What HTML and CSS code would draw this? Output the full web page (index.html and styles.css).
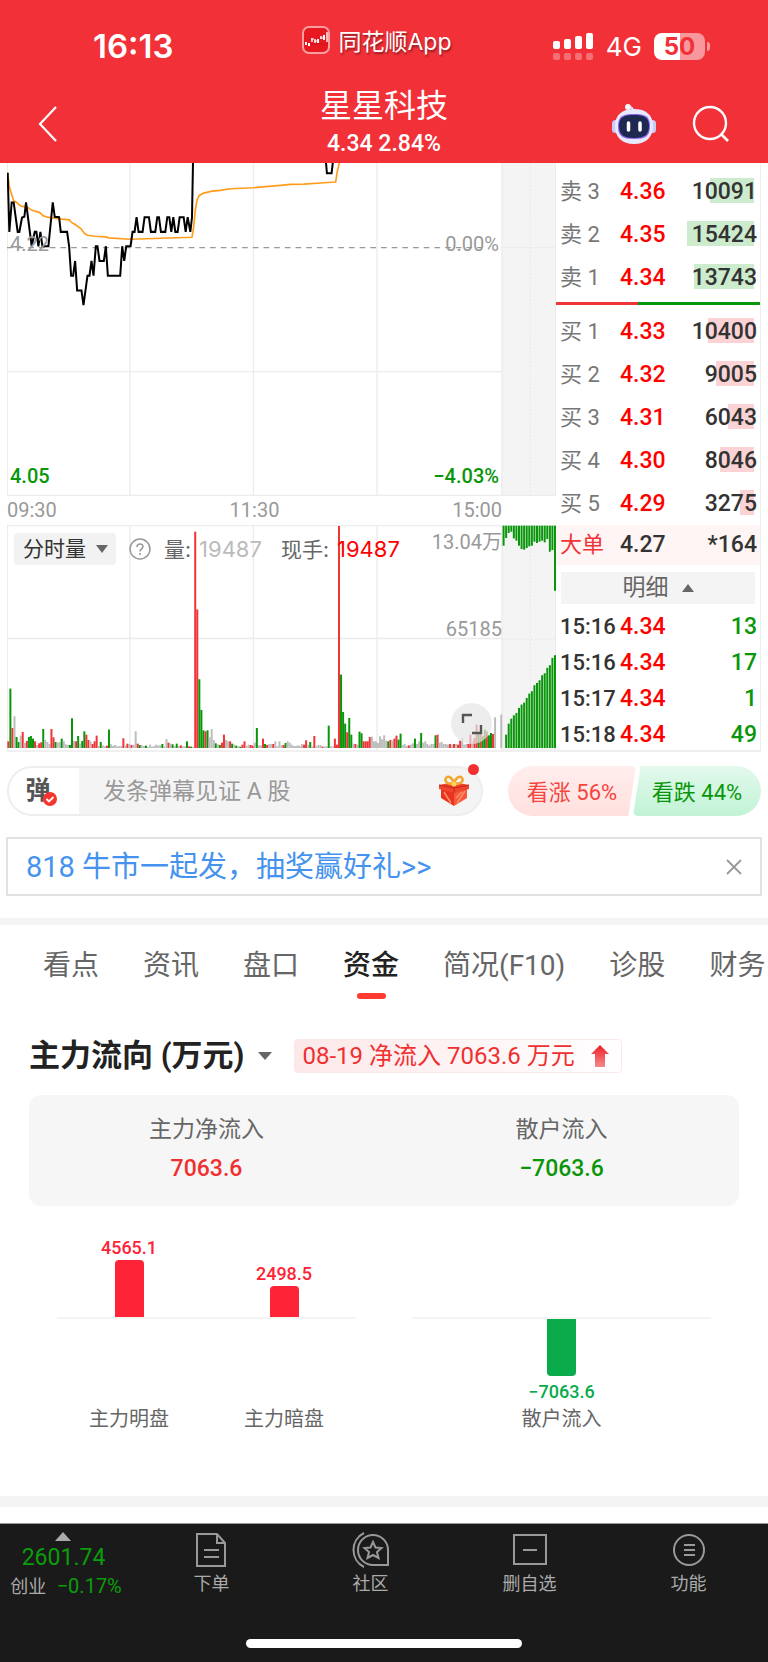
FILE: index.html
```html
<!DOCTYPE html>
<html lang="zh-CN">
<head>
    <title>星星科技</title>
    <meta charset="utf-8" />
    <meta name="viewport" content="width=device-width, initial-scale=1" />
    <link rel="stylesheet" href="styles.css">
</head>
<body>

    <header class="top">
        <div class="status">
            <div class="status_time">16:13</div>
            <div class="status_app">
                <svg width="28" height="28" viewBox="0 0 28 28">
                    <rect x="1" y="1" width="26" height="26" rx="6" fill="#e5191f" stroke="#f99ea1" stroke-width="2" />
                    <path d="M2 18h24" stroke="#c9141a" />
                    <path d="M4 16v3M7 17v3M16 13v4M22 9v5" stroke="#fff" stroke-width="2" />
                    <path d="M10 12v4M13 13v4M19 10v3M25 6v10" stroke="#fff" stroke-width="1.4" />
                    <path d="M9 13h3M12 15h3M18 12h3" stroke="#fff" />
                </svg>
                <span>同花顺App</span>
            </div>
            <div class="status_right">
                <svg width="41" height="28" viewBox="0 0 41 28">
                    <g fill="#fff">
                        <rect x="0" y="9" width="7" height="8" rx="2" />
                        <rect x="11" y="7" width="7" height="10" rx="2" />
                        <rect x="22" y="4" width="7" height="13" rx="2" />
                        <rect x="33" y="1" width="7" height="16" rx="2" />
                    </g>
                    <g fill="#fff" opacity=".3">
                        <rect x="0" y="21" width="7" height="7" rx="2" />
                        <rect x="11" y="21" width="7" height="7" rx="2" />
                        <rect x="22" y="21" width="7" height="7" rx="2" />
                        <rect x="33" y="21" width="7" height="7" rx="2" />
                    </g>
                </svg>
                <span class="net">4G</span>
                <span class="battery"><b>5</b><b>0</b></span>
            </div>
        </div>

        <div class="nav">
            <button type="button" class="icon_btn" aria-label="返回">
                <svg width="20" height="36" viewBox="0 0 20 36"><path d="M18 1L2 18l16 17" fill="none" stroke="#fff" stroke-width="2.2" /></svg>
            </button>
            <div class="nav_title">
                <h1>星星科技</h1>
                <p>4.34 2.84%</p>
            </div>
            <div class="nav_right">
                <button type="button" class="icon_btn" aria-label="智能助手">
                    <svg width="44" height="42" viewBox="0 0 44 42">
                        <path d="M21 9c0-4-1-5-5-5" fill="none" stroke="#dfe3fa" stroke-width="2" />
                        <circle cx="16" cy="4" r="3" fill="#f4f4ff" />
                        <rect x="0" y="17" width="7" height="13" rx="3.500" fill="#c9cdf5" />
                        <rect x="37" y="17" width="7" height="13" rx="3.500" fill="#c9cdf5" />
                        <path d="M22 6c12 0 19 6 19 17s-7 18-19 18S3 34 3 23 10 6 22 6z" fill="#e6eafc" />
                        <path d="M22 11c11 0 16 2 16 12s-4 13-16 13S6 33 6 23s5-12 16-12z" fill="#8a63f0" />
                        <path d="M22 12c10 0 15 2 15 11s-5 12-15 12S7 32 7 23s5-11 15-11z" fill="#1e2951" />
                        <path d="M16.500 20v7M28 20v7" stroke="#fff" stroke-width="3.500" stroke-linecap="round" />
                    </svg>
                </button>
                <button type="button" class="icon_btn" aria-label="搜索">
                    <svg width="38" height="38" viewBox="0 0 38 38"><circle cx="18" cy="18" r="16" fill="none" stroke="#fff" stroke-width="2.4" /><path d="M29 29l7 7" stroke="#fff" stroke-width="2.600" /></svg>
                </button>
            </div>
        </div>
    </header>

    <main>
        <section class="quote">
            <div class="charts">
                <div class="price_chart">
                    <svg viewBox="21 9 1644 996" preserveAspectRatio="none">
                        <rect x="1503" y="9" width="162" height="992" fill="#f4f4f4" />
                        <path d="M22 9V1004M389 9V1004M759 9V1004M1129 9V1004M1503 9V1004M1664 9V1004M21 633H1503M1503 262H1665M21 1003H1665" fill="none" stroke="#ececec" stroke-width="4" />
                        <path d="M1588 9V1004" stroke="#e6e6e6" stroke-width="3" stroke-dasharray="5 6" />
                        <path d="M21 262H1460" stroke="#999" stroke-width="4" stroke-dasharray="17 15" />
                        <polyline class="line_avg" points="23,38 28,80 34,100 41,122 50,127 56,133 63,138 80,140 90,147 100,152 115,156 120,158 128,166 142,171 160,174 185,177 208,179 213,186 225,193 243,206 252,219 262,225 285,228 318,230 325,233 390,237 575,231 580,200 585,150 590,120 597,106 610,99 635,93 660,91 690,86 758,83 840,76 870,73 910,72 970,68 1005,66 1010,35 1017,5" />
                        <polyline class="line_now" points="23,38 28,215 35,127 41,127 53,215 58,215 66,172 73,170 78,127 95,258 104,215 109,215 115,258 121,215 127,258 145,258 158,127 164,170 177,171 182,215 201,215 207,258 213,346 219,346 225,302 231,390 244,390 250,434 262,346 268,346 274,302 280,346 287,258 292,258 298,302 311,302 317,258 323,346 360,346 366,258 372,302 378,258 391,258 397,215 403,215 409,171 415,215 427,215 433,171 446,171 452,215 465,215 471,171 476,171 482,215 495,215 501,171 507,171 513,215 519,171 525,215 532,215 538,171 550,171 556,215 562,171 570,215 575,171 578,5" />
                        <polyline class="line_now" points="976,5 979,40 993,40 997,5" />
                    </svg>
                    <span class="tag tag_mid_left">4.22</span>
                    <span class="tag tag_mid_right">0.00%</span>
                    <span class="tag tag_low_left">4.05</span>
                    <span class="tag tag_low_right">−4.03%</span>
                </div>

                <div class="axis">
                    <span>09:30</span>
                    <span>11:30</span>
                    <span>15:00</span>
                </div>

                <div class="vol_chart">
                    <svg id="vol" viewBox="21 135 1644 680" preserveAspectRatio="none">
                        <rect x="1503" y="135" width="162" height="676" fill="#f4f4f4" />
                        <path d="M22 137V812M389 137V812M759 137V812M1129 137V812M1503 137V812M1664 137V812M21 137H1665M21 475H1503M21 812H1665" fill="none" stroke="#ececec" stroke-width="4" />
                        <path d="M1588 137V812M1503 477H1665" stroke="#e6e6e6" stroke-width="3" stroke-dasharray="5 6" />
                    </svg>
                    <div class="vol_head">
                        <button type="button" class="vol_type">分时量 <i class="down"></i></button>
                        <svg width="22" height="22" viewBox="0 0 22 22">
                            <circle cx="11" cy="11" r="10" fill="none" stroke="#999" stroke-width="1.5" />
                            <path d="M8 9c0-4 6-4 6-.500 0 2-3 2.500-3 5M11 15v2" fill="none" stroke="#999" stroke-width="1.600" />
                        </svg>
                        <span class="vol_item">量:<em class="muted">19487</em></span>
                        <span class="vol_item">现手:<em class="hot">19487</em></span>
                    </div>
                    <span class="tag tag_vol_top">13.04万</span>
                    <span class="tag tag_vol_mid">65185</span>
                    <button type="button" class="expand" aria-label="全屏">
                        <svg width="22" height="22" viewBox="0 0 22 22"><path d="M2 10V2h9M20 12v8h-9" fill="none" stroke="#555" stroke-width="2.400" /></svg>
                    </button>
                </div>
            </div>

            <div class="book">
                <table class="levels">
                    <tr><th>卖 3</th><td class="hot">4.36</td><td><i class="depth sell" style="width:44px"></i><span>10091</span></td></tr>
                    <tr><th>卖 2</th><td class="hot">4.35</td><td><i class="depth sell" style="width:67px"></i><span>15424</span></td></tr>
                    <tr><th>卖 1</th><td class="hot">4.34</td><td><i class="depth sell" style="width:60px"></i><span>13743</span></td></tr>
                </table>
                <div class="ratio"><i style="width:40%"></i></div>
                <table class="levels">
                    <tr><th>买 1</th><td class="hot">4.33</td><td><i class="depth buy" style="width:46px"></i><span>10400</span></td></tr>
                    <tr><th>买 2</th><td class="hot">4.32</td><td><i class="depth buy" style="width:38px"></i><span>9005</span></td></tr>
                    <tr><th>买 3</th><td class="hot">4.31</td><td><i class="depth buy" style="width:26px"></i><span>6043</span></td></tr>
                    <tr><th>买 4</th><td class="hot">4.30</td><td><i class="depth buy" style="width:34px"></i><span>8046</span></td></tr>
                    <tr><th>买 5</th><td class="hot">4.29</td><td><i class="depth buy" style="width:14px"></i><span>3275</span></td></tr>
                    <tr class="big"><th>大单</th><td>4.27</td><td><span>*164</span></td></tr>
                </table>
                <button type="button" class="detail">明细 <i class="up"></i></button>
                <table class="levels trades">
                    <tr><td>15:16</td><td class="hot">4.34</td><td>13</td></tr>
                    <tr><td>15:16</td><td class="hot">4.34</td><td>17</td></tr>
                    <tr><td>15:17</td><td class="hot">4.34</td><td>1</td></tr>
                    <tr><td>15:18</td><td class="hot">4.34</td><td>49</td></tr>
                </table>
            </div>
        </section>

        <section class="talk">
            <div class="danmu">
                <button type="button" class="danmu_switch" aria-label="弹幕开关">弹
                    <svg width="14" height="14" viewBox="0 0 14 14"><circle cx="7" cy="7" r="7" fill="#f5362f" /><path d="M3.500 7l2.500 2.500 4.500-4.500" fill="none" stroke="#fff" stroke-width="1.800" /></svg>
                </button>
                <input type="text" aria-label="弹幕" placeholder="发条弹幕见证 A 股">
                <svg class="gift" width="32" height="32" viewBox="0 0 32 32">
                    <path d="M3 12v11l13 8V15z" fill="#e8341f" />
                    <path d="M29 12v11l-13 8V15z" fill="#f4593a" />
                    <path d="M1 10l15-3 15 3v4l-15 4L1 14z" fill="#f0442c" />
                    <path d="M1 10l15 3 15-3M16 13v5" fill="none" stroke="#c4241a" />
                    <path d="M6 17l7 11M19 28l8-12M18 23l6-6" stroke="#ff8c68" stroke-width="1.500" />
                    <path d="M15 9C9 9 6 6 8 3s7 0 8 6c1-6 6-9 8-6s-1 6-7 6z" fill="none" stroke="#f0a92e" stroke-width="2.500" />
                    <circle cx="16" cy="9" r="2.500" fill="#ffd257" />
                </svg>
                <i class="dot"></i>
            </div>
            <div class="vote">
                <button type="button" class="vote_up">看涨 56%</button>
                <button type="button" class="vote_down">看跌 44%</button>
            </div>
        </section>

        <div class="banner">
            <a href="#">818 牛市一起发，抽奖赢好礼&gt;&gt;</a>
            <button type="button" class="icon_btn" aria-label="关闭">
                <svg width="16" height="16" viewBox="0 0 16 16"><path d="M1 1l14 14M15 1L1 15" stroke="#999" stroke-width="1.800" /></svg>
            </button>
        </div>

        <nav class="tabs">
            <a href="#">看点</a>
            <a href="#">资讯</a>
            <a href="#">盘口</a>
            <a href="#" class="on">资金</a>
            <a href="#">简况(F10)</a>
            <a href="#">诊股</a>
            <a href="#">财务</a>
        </nav>

        <section class="flow">
            <div class="flow_head">
                <h2>主力流向 (万元)</h2>
                <i class="down"></i>
                <div class="flow_tag">
                    08-19 净流入 7063.6 万元
                    <svg width="18" height="22" viewBox="0 0 18 22">
                        <defs><linearGradient id="fade" x1="0" y1="0" x2="0" y2="1"><stop offset="0" stop-color="#ec1f24" /><stop offset="1" stop-color="#f58a8c" /></linearGradient></defs>
                        <path d="M9 0l9 9h-4v13H4V9H0z" fill="url(#fade)" />
                    </svg>
                </div>
            </div>

            <div class="summary">
                <div>
                    <p>主力净流入</p>
                    <b class="up_text">7063.6</b>
                </div>
                <div>
                    <p>散户流入</p>
                    <b class="down_text">−7063.6</b>
                </div>
            </div>

            <div class="bars">
                <div class="group">
                    <div class="above">
                        <div class="col red">4565.1<i style="height:57px"></i></div>
                        <div class="col red">2498.5<i style="height:31px"></i></div>
                    </div>
                    <div class="below"></div>
                    <div class="names"><span>主力明盘</span><span>主力暗盘</span></div>
                </div>
                <div class="group single">
                    <div class="above"></div>
                    <div class="below">
                        <div class="col green"><i style="height:57px"></i>−7063.6</div>
                    </div>
                    <div class="names"><span>散户流入</span></div>
                </div>
            </div>
        </section>
    </main>

    <footer class="bottom">
        <div class="menu">
            <a href="#" class="index">
                <i class="up"></i>
                <b>2601.74</b>
                <span>创业 <em>−0.17%</em></span>
            </a>
            <a href="#">
                <svg width="36" height="36" viewBox="0 0 36 36"><path d="M3 2h20l8 9v23H3zM23 2v9h8M10 18h15M10 25h15" /></svg>
                下单
            </a>
            <a href="#">
                <svg width="38" height="36" viewBox="0 0 38 36"><path d="M36 33H21a15 15 0 1 1 15-15zM12 1a19 19 0 0 0 0 34" /><path d="M21 10l2.500 5.500 6 .500-4.500 4 1.500 6-5.500-3-5.500 3 1.500-6-4.500-4 6-.500z" /></svg>
                社区
            </a>
            <a href="#">
                <svg width="36" height="36" viewBox="0 0 36 36"><path d="M2 3h32v29H2zM11 18h14" /></svg>
                删自选
            </a>
            <a href="#">
                <svg width="34" height="36" viewBox="0 0 34 36"><circle cx="17" cy="18" r="15" /><path d="M12 13h11M12 18h11M12 23h11" /></svg>
                功能
            </a>
        </div>
        <div class="home"></div>
    </footer>

    <script type="text/javascript">

        // minute volume: r = up, g = down, s = flat, followed by the height
        var minutes = "r20 g178 r60 s95 g33 g18 s37 r48 s15 r21 g33 g36 g28 r20 s9 r14 r17 g57 s24 s18 s12 r57 r32 g18 s16 s18 g28 s21 s11 s9 g9 g89 s21 r20 g36 s13 g21 g50 r40 r24 " +
            "s20 r12 r20 r37 s6 g18 s8 s5 r7 g55 s11 s6 s9 s5 s6 s6 r29 s8 r13 s12 r9 s10 s50 r13 g9 s8 s6 g7 s3 s10 s4 s6 s10 s8 s8 g12 s5 s27 r16 s13 " +
            "g11 s6 g13 s6 r8 s5 s5 g20 r5 g4 s3 r648 r415 g206 g114 g53 r50 g53 s32 s57 s24 g14 s11 g9 r16 r40 s24 s20 r20 g13 s10 g7 s5 g4 r10 r20 s6 s10 r9 r7 " +
            "s16 g60 s8 s8 r28 g12 r9 s12 s12 r12 s20 s5 s20 s8 r9 g15 s20 s16 s10 s6 s6 s8 s6 s12 r10 r23 s10 g18 s5 r36 s5 s9 s9 r4 s5 s5 g67 s6 s4 r28 " +
            "r10 r665 g220 g108 g73 r47 g90 g40 s13 r12 s10 g49 g44 r20 r20 r20 r33 s34 s20 s20 s15 s35 s26 s38 s22 g20 r24 s22 r28 r37 g25 g43 s9 s12 s6 r8 s10 s14 g28 s12 " +
            "s20 g45 s16 s20 s12 s8 s12 s12 g38 r40 s16 s18 s12 s12 s10 r12 s10 r12 s12 r10 r22 s30 s10 s12 r12 r40 s20 r30 r70 g42 r45 g35 g55 r50 g38 g45 r42 s92 s0 s0 s100";
        var auctionTop = [60, 37, 22, 18, 38, 45, 60, 70, 72, 67, 62, 60, 48, 52, 48, 45, 50, 40, 78, 73, 195];
        var auctionBottom = [0, 40, 73, 88, 98, 105, 120, 130, 136, 150, 163, 170, 188, 195, 203, 218, 224, 240, 248, 270, 278];
        var colors = { r: "#f03438", g: "#0a960a", s: "#bdbdbd" };
        var vol = document.getElementById("vol");

        function addBar(x, y, width, height, color) {
            var rect = document.createElementNS("http://www.w3.org/2000/svg", "rect");
            rect.setAttribute("x", x);
            rect.setAttribute("y", y);
            rect.setAttribute("width", width);
            rect.setAttribute("height", height);
            rect.setAttribute("fill", color);
            vol.appendChild(rect);
        }

        minutes.split(" ").forEach(function (item, i) {
            var h = Number(item.slice(1));
            addBar(22 + i * 6.15, 803 - h, 6, h, colors[item[0]]);
        });

        for (var i = 0; i < auctionTop.length; i++) {
            var x = 1505 + i * 7.7;
            addBar(x, 137, 6, auctionTop[i], colors.g);
            addBar(x, 803 - auctionBottom[i], 6, auctionBottom[i], colors.g);
        }

    </script>

</body>
</html>
```

FILE: styles.css
```css
* {
    box-sizing: border-box;
}

body {
    margin: 0;
    background: #fff;
    color: #333;
    font-family: Roboto, "Noto Sans CJK SC", sans-serif;
    font-size: 24px;
}

h1, h2, p {
    margin: 0;
    font-weight: 400;
}

a {
    color: inherit;
    text-decoration: none;
}

button {
    border: 0;
    padding: 0;
    background: none;
    color: inherit;
    font: inherit;
}

svg {
    display: block;
    flex: none;
}

em, i {
    font-style: normal;
}

.icon_btn {
    display: block;
}

.down, .up {
    display: inline-block;
    border: 6px solid transparent;
}

.down {
    border-top: 8px solid #666;
    border-bottom: 0;
}

.up {
    border-bottom: 8px solid #666;
    border-top: 0;
}

.hot {
    color: #f00;
}

/* header */
.top {
    height: 163px;
    background: #f23038;
    color: #fff;
}

.status {
    display: grid;
    grid-template-columns: 1fr auto 1fr;
    align-items: center;
    height: 84px;
    padding: 8px 63px 0;
    font-family: Inter, "Noto Sans CJK SC", sans-serif;
}

.status_time {
    padding-left: 30px;
    font-size: 33px;
    font-weight: 600;
}

.status_app {
    display: flex;
    align-items: center;
    gap: 8px;
    margin: -12px 14px 0 0;
    font-size: 23px;
    text-shadow: 1px 2px 2px rgba(0, 0, 0, .4);
}

.status_right {
    display: flex;
    align-items: center;
    justify-content: flex-end;
    gap: 12px;
}

.net {
    font-size: 26px;
}

.battery {
    position: relative;
    display: flex;
    justify-content: center;
    width: 51px;
    border-radius: 8px;
    background: linear-gradient(90deg, #fff 50%, #f9989c 50%);
    color: #f23038;
    font-size: 24px;
    line-height: 27px;
}

.battery::after {
    content: "";
    position: absolute;
    right: -5px;
    top: 9px;
    width: 3px;
    height: 9px;
    border-radius: 0 3px 3px 0;
    background: #f9989c;
}

.nav {
    display: grid;
    grid-template-columns: 1fr auto 1fr;
    align-items: center;
    padding: 0 38px;
}

.nav > .icon_btn {
    justify-self: start;
    padding-top: 4px;
}

.nav_title {
    text-align: center;
}

.nav_title h1 {
    font-size: 32px;
    line-height: 44px;
}

.nav_title p {
    font-size: 23px;
    font-weight: 500;
    line-height: 32px;
}

.nav_right {
    display: flex;
    align-items: center;
    justify-content: flex-end;
    gap: 36px;
    padding-top: 4px;
}

/* charts + order book */
.quote {
    display: flex;
    padding: 0 7px;
}

.charts {
    flex: 1;
    min-width: 0;
}

.price_chart, .vol_chart {
    position: relative;
}

.price_chart svg:first-child {
    width: 100%;
    height: 333px;
}

.vol_chart > svg {
    width: 100%;
    height: 227px;
}

.line_avg, .line_now {
    fill: none;
    stroke: #ff9d1a;
    stroke-width: 5;
}

.line_now {
    stroke: #000;
    stroke-width: 6;
}

.tag {
    position: absolute;
    color: #999;
    font-size: 20px;
    line-height: 24px;
}

.tag_mid_left {
    left: 3px;
    top: 69px;
}

.tag_mid_right {
    right: 57px;
    top: 69px;
}

.tag_low_left, .tag_low_right {
    bottom: 8px;
    color: #0a960a;
    font-weight: 500;
}

.tag_low_left {
    left: 3px;
}

.tag_low_right {
    right: 57px;
}

.tag_vol_top {
    right: 54px;
    top: 5px;
}

.tag_vol_mid {
    right: 54px;
    top: 92px;
}

.axis {
    display: flex;
    justify-content: space-between;
    padding-right: 54px;
    color: #999;
    font-size: 20px;
    line-height: 29px;
}

.vol_head {
    position: absolute;
    left: 7px;
    top: 8px;
    display: flex;
    align-items: center;
    height: 32px;
    color: #666;
    font-size: 21px;
    line-height: 30px;
    white-space: nowrap;
}

.vol_type {
    display: flex;
    align-items: center;
    gap: 10px;
    height: 32px;
    margin-right: 13px;
    padding: 0 8px 0 9px;
    border-radius: 4px;
    background: #f2f2f2;
    color: #333;
}

.vol_item {
    margin-left: 13px;
    font-family: Inter, "Noto Sans CJK SC", sans-serif;
}

.vol_item + .vol_item {
    margin-left: 19px;
}

.vol_item em {
    margin-left: 8px;
    font-size: 22px;
}

.vol_item .muted {
    color: #bbb;
}

.expand {
    position: absolute;
    right: 64px;
    bottom: 8px;
    display: grid;
    place-items: center;
    width: 41px;
    height: 41px;
    border-radius: 50%;
    background: rgba(230, 230, 230, .7);
}

.book {
    width: 205px;
    padding-top: 7px;
    border-right: 1px solid #eee;
    border-bottom: 2px solid #eee;
}

.levels {
    width: 100%;
    border-collapse: collapse;
    table-layout: fixed;
    font-size: 23px;
    font-weight: 500;
}

.levels tr {
    height: 43px;
}

.levels th, .levels td {
    position: relative;
    width: 64px;
    padding: 0;
    line-height: 30px;
    text-align: left;
}

.levels th {
    padding-left: 4px;
    color: #777;
    font-size: 22px;
    font-weight: 400;
}

.levels td:last-child {
    width: auto;
    padding-right: 3px;
    text-align: right;
}

.levels td span {
    position: relative;
}

.depth {
    position: absolute;
    right: 6px;
    top: 8px;
    height: 25px;
}

.sell {
    background: #cdebcd;
}

.buy {
    background: #fbd3d4;
}

.ratio {
    height: 3px;
    margin: 3px 0 5px;
    background: #0a960a;
}

.ratio i {
    display: block;
    height: 3px;
    background: #f03438;
}

.levels .big {
    height: 40px;
    background: #fff5f5;
}

.levels .big th {
    color: #f03438;
}

.detail {
    display: flex;
    align-items: center;
    justify-content: center;
    gap: 13px;
    width: calc(100% - 10px);
    height: 32px;
    margin: 7px 5px 5px;
    background: #f4f4f4;
    color: #666;
    font-size: 23px;
    line-height: 32px;
}

.trades tr {
    height: 36px;
}

.trades {
    margin-bottom: -4px;
}

.trades td:first-child {
    padding-left: 4px;
    font-size: 22px;
}

.trades td:last-child {
    color: #0a960a;
}

/* comments and votes */
.talk {
    display: flex;
    justify-content: space-between;
    padding: 14px 7px 21px;
}

.danmu {
    position: relative;
    display: flex;
    align-items: center;
    width: 476px;
    height: 50px;
    padding-right: 11px;
    border: 2px solid #eee;
    border-radius: 25px;
    background: #f4f4f4;
}

.danmu_switch {
    position: relative;
    width: 70px;
    height: 46px;
    padding-right: 12px;
    border-radius: 23px 0 0 23px;
    background: #fff;
    color: #555;
    font-size: 25px;
    font-weight: 700;
    line-height: 42px;
}

.danmu_switch svg {
    position: absolute;
    left: 34px;
    bottom: 8px;
}

.danmu input {
    flex: 1;
    min-width: 0;
    padding: 0 0 0 24px;
    border: 0;
    outline: 0;
    background: none;
    font: inherit;
    font-size: 23px;
}

.danmu input::placeholder {
    color: #999;
}

.dot {
    position: absolute;
    right: 2px;
    top: -4px;
    width: 11px;
    height: 11px;
    border-radius: 50%;
    background: #f03030;
}

.vote {
    display: flex;
    font-size: 22px;
}

.vote button {
    width: 128px;
    height: 50px;
    padding-bottom: 2px;
}

.vote_up {
    border-radius: 25px 5px 5px 25px;
    background: linear-gradient(#ffeeed, #ffe0de);
    clip-path: polygon(0 0, 100% 0, 94% 100%, 0 100%);
    color: #f5443c;
}

.vote_down {
    margin-left: -3px;
    border-radius: 5px 25px 25px 5px;
    background: linear-gradient(#e3f9ec, #c1f3d6);
    clip-path: polygon(6% 0, 100% 0, 100% 100%, 0 100%);
    color: #0a960a;
}

.banner {
    display: flex;
    align-items: center;
    justify-content: space-between;
    height: 59px;
    margin: 0 6px 22px;
    padding: 0 18px;
    border: 2px solid #e2e2e2;
    color: #4593ee;
    font-size: 29px;
    line-height: 54px;
}

/* tabs */
.tabs {
    display: flex;
    gap: 44px;
    height: 94px;
    padding: 18px 0 0 43px;
    border-top: 7px solid #f4f4f4;
    overflow: hidden;
    color: #666;
    font-size: 28px;
    line-height: 46px;
    white-space: nowrap;
}

.tabs .on {
    color: #222;
    font-weight: 500;
}

.tabs .on::after {
    content: "";
    display: block;
    width: 29px;
    height: 6px;
    margin: 4px auto 0;
    border-radius: 3px;
    background: #ff3a31;
}

/* money flow */
.flow {
    padding: 27px 29px 0;
}

.flow::after {
    content: "";
    display: block;
    height: 11px;
    margin: 63px -29px 16px;
    background: #f4f4f4;
}

.flow_head {
    display: flex;
    align-items: center;
}

.flow_head h2 {
    color: #222;
    font-size: 31px;
    font-weight: 700;
    line-height: 34px;
}

.flow_head > .down {
    margin: 0 22px 0 14px;
    border-width: 8px 7px 0;
}

.flow_tag {
    display: flex;
    align-items: center;
    gap: 16px;
    padding: 0 12px 0 7px;
    border: 1px solid #fde8e8;
    border-radius: 4px;
    background: linear-gradient(90deg, #fde8e9, #fff);
    color: #f03030;
    font-size: 24px;
    line-height: 32px;
    white-space: nowrap;
}

.summary {
    display: flex;
    margin-top: 22px;
    padding: 17px 0 16px;
    border-radius: 12px;
    background: #f6f6f6;
    text-align: center;
}

.summary div {
    flex: 1;
}

.summary p {
    color: #666;
    font-size: 23px;
    line-height: 36px;
}

.summary b {
    display: block;
    font-size: 23px;
    font-weight: 500;
    line-height: 42px;
}

.up_text {
    color: #f03030;
}

.down_text {
    color: #0a960a;
}

.bars {
    display: flex;
}

.group {
    flex: 1;
    padding: 0 28px;
}

.above, .below, .names {
    display: flex;
    justify-content: space-between;
    padding: 0 32px;
}

.above {
    align-items: flex-end;
    height: 113px;
    border-bottom: 2px solid #f4f4f4;
}

.below {
    height: 86px;
}

.single .below, .single .names {
    justify-content: center;
}

.col {
    display: flex;
    flex-direction: column;
    align-items: center;
    width: 80px;
    font-size: 18px;
    font-weight: 500;
    line-height: 24px;
}

.col i {
    width: 29px;
}

.red {
    color: #ff2337;
}

.red i {
    border-radius: 4px 4px 0 0;
    background: #ff2337;
}

.green {
    color: #09ab4b;
}

.green i {
    margin-bottom: 4px;
    border-radius: 0 0 4px 4px;
    background: #09ab4b;
}

.names {
    color: #666;
    font-size: 20px;
    line-height: 28px;
}

/* bottom bar */
.bottom {
    padding-bottom: 15px;
    border-top: 1px solid #999;
    background: #1a1a1a;
    color: #aaa;
}

.menu {
    display: flex;
    height: 115px;
    padding-top: 8px;
    font-size: 18px;
}

.menu a {
    display: flex;
    flex: 1;
    flex-direction: column;
    align-items: center;
    line-height: 32px;
}

.menu svg {
    fill: none;
    stroke: #999;
    stroke-width: 2;
}

.menu .index {
    flex: 0 0 132px;
    line-height: 28px;
}

.index .up {
    margin-right: 6px;
    border-width: 0 8px 9px;
    border-bottom-color: #aaa;
}

.index b {
    margin: 3px 5px 0 0;
    color: #0a9e0a;
    font-size: 23px;
    font-weight: 400;
    line-height: 28px;
}

.index em {
    margin-left: 6px;
    color: #0a9e0a;
    font-size: 20px;
}

.home {
    width: 36%;
    height: 9px;
    margin: 0 auto;
    border-radius: 5px;
    background: #fff;
}
```
